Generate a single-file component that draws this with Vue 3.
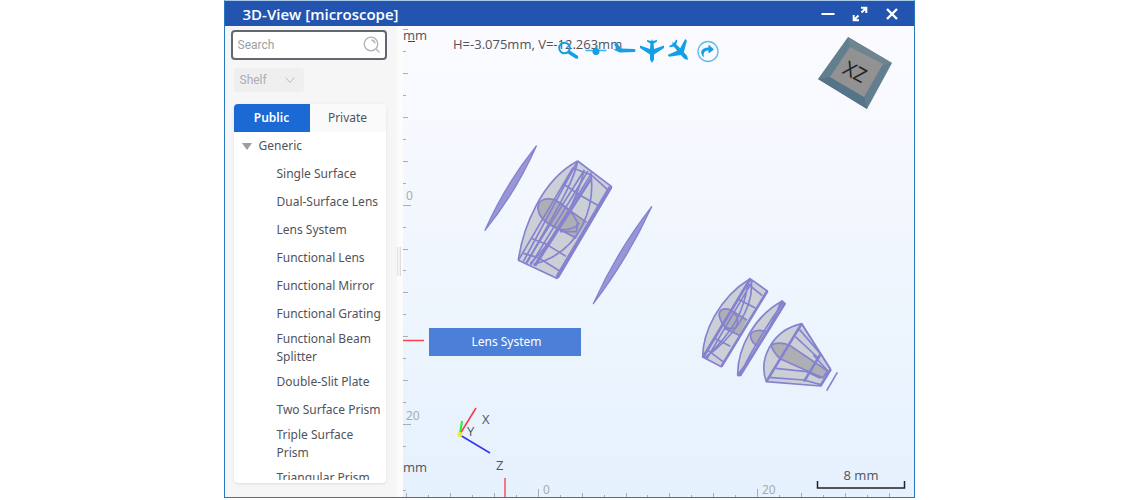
<script setup>
import { ref } from 'vue'

const query = ref('')
const shelf = ref('Shelf')
const tab = ref('Public')
const tabs = ['Public', 'Private']
const items = [
  'Single Surface', 'Dual-Surface Lens', 'Lens System', 'Functional Lens',
  'Functional Mirror', 'Functional Grating', 'Functional Beam Splitter',
  'Double-Slit Plate', 'Two Surface Prism', 'Triple Surface Prism', 'Triangular Prism',
]

const leftTicks = Array.from({ length: 22 }, (_, i) => ({
  y: Math.round(29 + i * 21.95),
  len: i === 8 || i === 18 ? 8 : i % 2 ? 3 : 5,
})).filter((t) => t.y !== 468)
const bottomTicks = Array.from({ length: 23 }, (_, i) => ({
  x: Math.round(406 + i * 21.95),
  len: i === 6 || i === 16 ? 8 : i % 2 ? 2 : 4,
}))
</script>

<template>
  <main class="page">
    <section class="window">
      <header class="titlebar">
        <h1>3D-View [microscope]</h1>
        <div class="controls">
          <button type="button" aria-label="Minimize">
            <svg viewBox="0 0 16 16"><path d="M1.500 8h13" stroke-width="2" /></svg>
          </button>
          <button type="button" aria-label="Maximize">
            <svg viewBox="0 0 16 16"><path d="M9.500 6.500L14 2M9 1.700h5.300V7M6.500 9.500L2 14M1.700 9v5.300H7" stroke-width="2" /></svg>
          </button>
          <button type="button" aria-label="Close">
            <svg viewBox="0 0 16 16"><path d="M3 3l10 10M13 3L3 13" stroke-width="2.400" /></svg>
          </button>
        </div>
      </header>

      <div class="body">
        <aside class="sidebar">
          <label class="search">
            <input v-model="query" type="text" placeholder="Search" aria-label="Search" />
            <svg viewBox="0 0 18 18"><circle cx="8" cy="8" r="6.800" /><path d="M13 13l3.500 3.500M8.500 4a4 4 0 0 1 3.500 3.500" /></svg>
          </label>
          <div class="shelf">
            <select v-model="shelf" aria-label="Shelf"><option>Shelf</option></select>
            <svg viewBox="0 0 12 12"><path d="M1.500 3.500L6 8.500l4.500-5" /></svg>
          </div>
          <div class="panel">
            <div class="tabs">
              <button v-for="t in tabs" :key="t" type="button" :class="{ active: tab === t }" @click="tab = t">{{ t }}</button>
            </div>
            <div class="tree">
              <div class="group"><span class="caret"></span>Generic</div>
              <ul>
                <li v-for="item in items" :key="item">{{ item }}</li>
              </ul>
            </div>
          </div>
        </aside>
        <div class="splitter"><span></span></div>

        <div class="view">
          <svg class="scene" viewBox="403 26 511 471" preserveAspectRatio="xMinYMin meet">
            <g class="ticks">
              <path v-for="t in leftTicks" :key="'l' + t.y" :d="`M403 ${t.y + 0.5}h${t.len}`" />
              <path v-for="t in bottomTicks" :key="'b' + t.x" :d="`M${t.x + 0.5} 497v-${t.len}`" />
            </g>
            <g class="scale-text">
              <text x="406" y="200">0</text>
              <text x="406" y="420">20</text>
              <text x="543" y="494">0</text>
              <text x="762" y="494">20</text>
            </g>
            <g class="label">
              <text x="403" y="40">mm</text>
              <text x="403" y="472">mm</text>
              <text x="453" y="49">H=-3.075mm, V=-12.263mm</text>
            </g>
            <path d="M408 41.500h7" stroke="#444" />
            <path d="M403 340.500h21M505 478v19" stroke="#f8444f" stroke-width="1.400" />

            <g transform="translate(470 135) scale(.3333333)" class="lens">
              <path class="thin" d="M199 33Q139 170 45 286Q105 149 199 33Z" />
              <path class="thin" d="M545 215Q474 370 370 506Q440 350 545 215Z" />
              <path class="body-fill" d="M323 78L424 154L260 430L145 376C158 280 214 135 323 78Z" />
              <path class="dark" d="M204 220C202 196 224 187 253 194C286 216 326 240 350 262L319 310L238 272C214 256 207 240 204 220Z" />
              <g class="wire">
                <path d="M323 78C214 135 158 280 145 376M323 78L424 154L260 430L145 376" />
                <path d="M309 98L145 376M323 78L160 380M343 105L168 384M354 108L182 390M364 116L192 392" />
                <path d="M323 78C310 148 249 240 170 385M343 105C322 190 268 300 180 386M362 112C376 205 340 350 190 388" />
                <path d="M310 100L364 120L415 166M285 150L329 180L391 215M253 194L350 262M183 310L230 328L288 364M160 355L205 368L268 407" />
                <path d="M204 220C202 196 224 187 253 194C292 211 312 240 323 263L319 290L270 290M204 220C207 250 229 266 260 278L319 310" />
                <path d="M328 265C312 286 265 292 248 271" />
              </g>
              <path class="edge" d="M424 154L260 430M364 130L195 392" />
              <path class="rim" d="M421 157L262 426" />
            </g>

            <g transform="translate(690 265) scale(.3333333)" class="lens">
              <path class="body-fill" d="M180 41L232 78L94 305L38 276C38 205 85 99 180 41Z" />
              <path class="dark" d="M88 154C85 133 102 127 122 135L171 165L148 211L105 191Q91 178 88 154Z" />
              <g class="wire">
                <path d="M180 41C85 99 38 205 38 276L94 305L232 78L180 41L38 276M188 47L50 282M183 42C196 130 126 220 45 278M175 46C164 139 128 203 48 276" />
                <path d="M170 54L217 92M142 101L196 129M122 135L171 165M73 220L121 244M54 256L102 292" />
                <path d="M88 154C85 133 102 127 122 135C143 149 149 169 136 188Q101 201 88 154ZM105 191L148 211" />
              </g>
              <path class="edge" d="M232 78L94 305M180 43L40 276" />

              <path class="body-fill" d="M277 108L285 116L150 332L143 331C142 247 195 152 277 108Z" />
              <path class="dark" d="M181 212C185 193 215 193 231 202L205 244Q183 237 181 212Z" />
              <g class="wire">
                <path d="M277 108C195 152 142 247 143 331L150 332L285 116ZM270 116Q238 208 145 327M280 112Q210 208 148 331" />
                <path d="M181 212C185 193 215 193 231 202M181 212Q185 237 205 244" />
              </g>
              <path class="edge" d="M285 114L150 332M277 108L268 120" />

              <path class="body-fill" d="M335 176L422 313L391 363L229 350C205 285 243 197 335 176Z" />
              <path class="dark" d="M243 240Q267 228 303 241L413 318L398 335L363 326L270 281Q249 261 243 240Z" />
              <g class="wire">
                <path d="M335 176C243 197 205 285 229 350L391 363L422 313ZM243 240Q267 228 299 241L413 318L398 338L270 281Q249 261 243 240" />
                <path d="M326 191L397 273M316 215L388 282M257 310L350 320L396 338M236 337L342 345L392 359M335 176L420 311M370 270L415 320M350 320L391 340" />
              </g>
              <path class="edge" d="M335 176L229 350M391 268L342 350M422 313L391 363" />
              <path d="M442 322L410 377" stroke-width="5" />
            </g>

            <g fill="none" stroke-width="1.500">
              <path d="M460 434L476 408" stroke="#f53844" />
              <path d="M460 435L490 453" stroke="#3434f4" />
              <path d="M460 434L462 421" stroke="#28ef32" stroke-width="2" />
              <circle cx="460" cy="434.500" r="1.500" stroke="#f4ee15" stroke-width="2" />
            </g>
            <g class="label">
              <text x="482" y="424">X</text>
              <text x="467" y="436">Y</text>
              <text x="496" y="470">Z</text>
            </g>

            <path d="M848 37L892 63L867 109L818 79Z" fill="#637e8e" />
            <path d="M848 37L892 63L883 65L850 47Z" fill="#6e848f" />
            <path d="M818 79L867 109L864 97L830 77Z" fill="#557487" />
            <path d="M850 47L883 64L864 97L830 77Z" fill="#929293" />
            <text class="face" x="855" y="79" text-anchor="middle" transform="rotate(28 855 72)">XZ</text>

            <path d="M817.500 481v7h87v-7" fill="none" stroke="#222" stroke-width="1.500" />
            <text class="label" x="861" y="480" text-anchor="middle">8 mm</text>
          </svg>

          <nav class="tools" aria-label="View tools">
            <button type="button" aria-label="Zoom">
              <svg viewBox="0 0 24 24"><circle cx="8.500" cy="9" r="5.300" fill="none" stroke="#139fe6" stroke-width="2" /><path d="M13.500 13.500L20.500 18" stroke="#139fe6" stroke-width="3.500" stroke-linecap="round" /></svg>
            </button>
            <button type="button" aria-label="Front view">
              <svg viewBox="0 0 24 24"><path d="M1.500 11.500h21M12 7v6" stroke="#139fe6" stroke-width="1.600" opacity=".8" /><circle cx="12" cy="12.500" r="3.500" /></svg>
            </button>
            <button type="button" aria-label="Side view">
              <svg viewBox="0 0 24 24"><path d="M2 5l3-1 4 5.500 13.500.500q2 1.500 0 3L8 13.500 1 10.500l4-.500Z" /></svg>
            </button>
            <button type="button" aria-label="Top view">
              <svg viewBox="0 0 24 24"><path d="M12 24l-2-3.500v-5L0 9V6.500l10 3.500L10.400 4.500 7 2.500V1l4.300 1L12 0l.700 2L17 1v1.500L13.600 4.500l.400 5.500L24 6.500V9l-10 6.500v5Z" /></svg>
            </button>
            <button type="button" aria-label="Isometric view">
              <svg viewBox="0 0 24 24"><g transform="rotate(-42 12 12)"><path d="M12 24l-2-3.500v-5L0 9V6.500l10 3.500L10.400 4.500 7 2.500V1l4.300 1L12 0l.700 2L17 1v1.500L13.600 4.500l.400 5.500L24 6.500V9l-10 6.500v5Z" /></g></svg>
            </button>
            <button type="button" aria-label="Rotate">
              <svg viewBox="0 0 24 24"><circle cx="12" cy="12.500" r="10" fill="none" stroke="#61bce9" stroke-width="1.300" /><path d="M8 18.500C3 14 5 8.500 12.500 8.500V5.500l5.500 5-5.500 4v-3c-4 0-5.500 2-4.500 7Z" /></svg>
            </button>
          </nav>
          <div class="drag-tag">Lens System</div>
        </div>
      </div>
    </section>
  </main>
</template>

<style>
body { margin: 0; background: #fff; }
</style>

<style scoped>
* { box-sizing: border-box; }
.page {
  display: flex;
  justify-content: center;
  height: 100vh;
  padding-right: 2px;
  overflow: hidden;
  font: 12px/18px "Noto Sans", "Open Sans", sans-serif;
  color: #50535b;
}
button, input, select { font: inherit; color: inherit; border: 0; background: none; padding: 0; margin: 0; }
.window {
  display: flex;
  flex-direction: column;
  width: 61%;
  max-width: 691px;
  height: calc(100vh - 2px);
  border: 1px solid #2b79bd;
  border-top-color: #a8c8e8;
}
.titlebar {
  display: flex;
  align-items: center;
  justify-content: space-between;
  flex: none;
  height: 25px;
  padding: 1px 14px 0 18px;
  background: #2355b0;
  color: #fff;
}
h1 { margin: 0; font: 600 15px/20px "Open Sans", "Noto Sans", sans-serif; }
.controls { display: flex; gap: 16px; }
.controls button { width: 16px; height: 16px; }
.controls svg { display: block; fill: none; stroke: #fff; }
.body { display: flex; flex: 1; min-height: 0; }
.sidebar {
  display: flex;
  flex-direction: column;
  flex: none;
  width: 172px;
  padding: 4px 10px 14px 6px;
  background: #f6f6f7;
}
.search {
  display: flex;
  align-items: center;
  flex: none;
  height: 30px;
  padding: 0 4px 0 5px;
  border: 2px solid #626771;
  border-radius: 4px;
  background: #fff;
}
.search input { flex: 1; min-width: 0; outline: 0; font-family: Roboto, sans-serif; }
.search input::placeholder { color: #9b9ea4; }
.search svg { width: 18px; height: 18px; fill: none; stroke: #aeb1b6; stroke-width: 1.300; }
.shelf {
  position: relative;
  flex: none;
  width: 70px;
  height: 24px;
  margin: 8px 0 12px 3px;
  border-radius: 4px;
  background: #efeff0;
  color: #aaadb4;
  font-family: Roboto, sans-serif;
}
.shelf select { appearance: none; width: 100%; height: 100%; padding: 0 6px; }
.shelf svg { position: absolute; right: 8px; top: 6px; width: 12px; height: 12px; fill: none; stroke: #b7b9be; pointer-events: none; }
.panel {
  display: flex;
  flex-direction: column;
  flex: 1;
  min-height: 0;
  margin-left: 3px;
  margin-right: 1px;
  padding-bottom: 3px;
  border-radius: 4px;
  background: #fff;
  box-shadow: 0 1px 3px #0000001a;
}
.tabs { display: flex; flex: none; height: 28px; }
.tabs button { flex: 1; background: #fafafa; border-top-right-radius: 4px; }
.tabs .active { background: #1a69d4; color: #fff; font-weight: 600; border-radius: 4px 0 0 0; }
.tree { flex: 1; overflow: hidden; }
.group { display: flex; align-items: center; gap: 7px; height: 28px; padding-left: 8px; }
.caret { border: 5px solid transparent; border-top: 7px solid #9b9da2; border-bottom: 0; }
ul { list-style: none; margin: 0; padding: 0 0 0 43px; }
li { display: flex; align-items: center; min-height: 28px; padding: 2px 0; }
.splitter { display: flex; align-items: center; flex: none; width: 6px; background: #fcfcfc; }
.splitter span { width: 4px; height: 29px; background: #f3f3f3; border-right: 1px solid #ddd; border-left: 1px solid #e4e4e4; }
.view {
  position: relative;
  flex: 1;
  min-width: 0;
  overflow: hidden;
  background: linear-gradient(#fbfbff, #f0f6fe 50%, #e5f1fd);
}
.scene { display: block; width: 100%; height: 100%; }
.ticks { stroke: #a9adb2; }
.scale-text { fill: #a7abb0; }
.label { fill: #50535b; font: 13px "Open Sans", "Noto Sans", sans-serif; }
.face { fill: #262626; font-size: 20px; }
.lens { fill: none; stroke: #8582d0; stroke-linejoin: round; }
.lens .thin { fill: #9995d6; stroke-width: 4; }
.lens .body-fill { fill: #ccd0d6; stroke: none; }
.lens .dark { fill: #adafb5; stroke: none; }
.lens .wire { stroke-width: 5; }
.lens .edge { stroke-width: 8; }
.lens .rim { stroke-width: 12; }
.tools { position: absolute; left: 151px; top: 13px; display: flex; }
.tools button { width: 28px; height: 24px; }
.tools svg { display: block; width: 24px; height: 24px; margin: 0 auto; fill: #139fe6; }
.drag-tag {
  position: absolute;
  left: 26px;
  top: 302px;
  width: 152px;
  line-height: 28px;
  padding-left: 4px;
  text-align: center;
  background: #4c7fd7;
  color: #fff;
}
</style>
